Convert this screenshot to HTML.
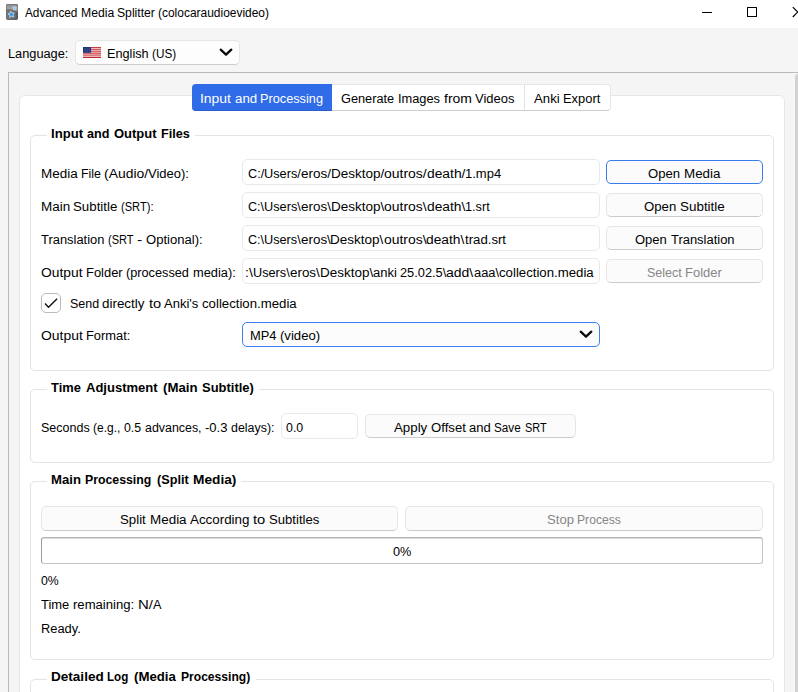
<!DOCTYPE html>
<html><head><meta charset="utf-8"><title>Advanced Media Splitter</title>
<style>
html,body{margin:0;padding:0;}
body{width:798px;height:692px;overflow:hidden;position:relative;background:#f5f5f5;font-family:"Liberation Sans",sans-serif;font-size:12.5px;color:#000;}
div,span,svg{position:absolute;box-sizing:border-box;}
.t{line-height:16px;white-space:nowrap;transform-origin:0 0;color:#000;}
#titlebar{left:0;top:0;width:798px;height:28px;background:#fff;}
.combo{background:#fdfdfd;border:1px solid #e6e6e6;border-bottom-color:#cdcdcd;border-radius:5px;}
.edit{background:#fff;border:1px solid #e9e9e9;border-radius:5px;}
.btn{background:#fbfbfb;border:1px solid #e6e6e6;border-bottom-color:#cbcbcb;border-radius:5px;}
.grp{border:1px solid #e4e4e4;border-radius:5px;}
.gt{background:#fff;height:14px;}

</style></head>
<body>
<div id="titlebar"></div>
<!-- app icon -->
<svg style="left:6px;top:4px" width="12" height="16" viewBox="0 0 12 16">
  <defs>
    <linearGradient id="ig" x1="0" y1="0" x2="1" y2="0"><stop offset="0" stop-color="#7a7a7a"/><stop offset="0.75" stop-color="#6a6a6a"/><stop offset="1" stop-color="#4e4e4e"/></linearGradient>
    <linearGradient id="ih" x1="0" y1="0" x2="0" y2="1"><stop offset="0" stop-color="#8a8a8a"/><stop offset="0.5" stop-color="#a4a4a4"/><stop offset="1" stop-color="#8c8c8c"/></linearGradient>
    <clipPath id="ic"><rect x="0" y="0" width="12" height="16" rx="2.2"/></clipPath>
  </defs>
  <g clip-path="url(#ic)">
    <rect width="12" height="16" fill="url(#ig)"/>
    <path d="M0 0 H12 V8.6 C9 6.2 4 4.6 0 5.2 Z" fill="url(#ih)"/>
    <rect x="0" y="0" width="12" height="16" rx="2.2" fill="none" stroke="#5a5a5a" stroke-width="0.8"/>
  </g>
  <polygon points="4.76,7.15 6.10,8.97 8.35,8.90 7.03,10.74 7.80,12.86 5.65,12.17 3.86,13.56 3.85,11.30 1.98,10.03 4.13,9.32" fill="#2b95ea" stroke="#dbeeff" stroke-width="0.7" stroke-linejoin="round"/>
  <polygon points="8.95,2.23 9.32,3.51 10.58,3.92 9.48,4.67 9.48,6.00 8.43,5.18 7.16,5.59 7.61,4.34 6.83,3.26 8.16,3.30" fill="#62b0f2" stroke="#eef7ff" stroke-width="0.6" stroke-linejoin="round"/>
</svg>
<!-- window controls -->
<div style="left:702px;top:12px;width:10px;height:1px;background:#000"></div>
<div style="left:747px;top:7px;width:10px;height:10px;border:1px solid #000;border-radius:0.5px"></div>
<svg style="left:792px;top:6px" width="6" height="12" viewBox="0 0 6 12"><path d="M0.8 1.2 L6 6.4 M0.8 11 L6 5.8" stroke="#000" stroke-width="1.15" fill="none"/></svg>

<!-- language combo -->
<div class="combo" style="left:75px;top:40px;width:165px;height:25px"></div>
<svg style="left:83px;top:47px" width="18" height="11" viewBox="0 0 18 11">
  <rect width="18" height="11" fill="#eec9c9"/>
  <g fill="#cf4a50"><rect y="0" width="18" height="1"/><rect y="1.9" width="18" height="1"/><rect y="3.8" width="18" height="1"/><rect y="5.7" width="18" height="1.1"/><rect y="7.6" width="18" height="1"/></g>
  <rect y="9.9" width="18" height="1.1" fill="#c4242a"/>
  <rect y="0" width="18" height="0.7" fill="#c8343a"/>
  <rect width="8" height="5.8" fill="#1f3579"/>
  <g fill="#3a4f90"><rect x="1.5" y="1.2" width="1.2" height="3.4"/><rect x="3.6" y="1.2" width="1.2" height="3.4"/><rect x="5.7" y="1.2" width="1.2" height="3.4"/></g>
</svg>
<svg style="left:219px;top:48px" width="14" height="9" viewBox="0 0 14 9"><path d="M1.7 1.7 L7 6.7 L12.3 1.7" stroke="#0c0c0c" stroke-width="2.3" fill="none" stroke-linecap="round" stroke-linejoin="round"/></svg>

<!-- outer scroll frame -->
<div style="left:8px;top:72px;width:800px;height:700px;border:1px solid #b9b9b9;border-bottom:none;background:#f5f5f5"></div>
<div style="left:795px;top:74px;width:3px;height:620px;background:#d2d2d2;border-radius:3px 0 0 0"></div>
<!-- tab pane -->
<div style="left:19px;top:95px;width:766px;height:700px;background:#fff;border:1px solid #e6e6e6;border-radius:6px"></div>
<!-- tabs -->
<div style="left:192px;top:84px;width:419px;height:27px;background:#fff;border:1px solid #e6e6e6;border-bottom-color:#cdcdcd;border-radius:4px"></div>
<div style="left:192px;top:84px;width:140px;height:27px;background:#306be8;border-bottom:1px solid #2a5ecf;border-radius:4px 0 0 4px"></div>
<div style="left:524px;top:85px;width:1px;height:25px;background:#e2e2e2"></div>

<!-- group 1 -->
<div class="grp" style="left:30px;top:135px;width:744px;height:236px"></div>
<div class="gt" style="left:47px;top:128px;width:148px"></div>
<div class="edit" style="left:242px;top:159px;width:358px;height:26px"></div>
<div class="edit" style="left:242px;top:192px;width:358px;height:26px"></div>
<div class="edit" style="left:242px;top:225px;width:358px;height:26px"></div>
<div class="edit" style="left:242px;top:258px;width:358px;height:26px"></div>
<div class="btn" style="left:606px;top:160px;width:157px;height:24px;border-color:#3a7cf0"></div>
<div class="btn" style="left:606px;top:193px;width:157px;height:24px"></div>
<div class="btn" style="left:606px;top:226px;width:157px;height:24px"></div>
<div class="btn" style="left:606px;top:259px;width:157px;height:24px"></div>
<!-- checkbox -->
<div style="left:41px;top:293px;width:20px;height:20px;background:#fff;border:1px solid #bcbcbc;border-radius:5px"></div>
<svg style="left:41px;top:293px" width="20" height="20" viewBox="0 0 20 20"><path d="M4.0 10.4 L7.5 14.2 L16.1 5.7" stroke="#141414" stroke-width="1.45" fill="none" stroke-linecap="butt" stroke-linejoin="miter"/></svg>
<!-- output format combo -->
<div class="combo" style="left:242px;top:322px;width:358px;height:25px;border-color:#3d80f2;background:#fcfcfc"></div>
<svg style="left:579px;top:330px" width="14" height="9" viewBox="0 0 14 9"><path d="M1.7 1.7 L7 6.7 L12.3 1.7" stroke="#0c0c0c" stroke-width="2.3" fill="none" stroke-linecap="round" stroke-linejoin="round"/></svg>

<!-- group 2 -->
<div class="grp" style="left:30px;top:389px;width:744px;height:74px"></div>
<div class="gt" style="left:47px;top:382px;width:212px"></div>
<div class="edit" style="left:281px;top:413px;width:77px;height:26px"></div>
<div class="btn" style="left:365px;top:414px;width:211px;height:24px"></div>

<!-- group 3 -->
<div class="grp" style="left:30px;top:481px;width:744px;height:179px"></div>
<div class="gt" style="left:47px;top:475px;width:194px"></div>
<div class="btn" style="left:41px;top:506px;width:357px;height:25px"></div>
<div class="btn" style="left:405px;top:506px;width:358px;height:25px"></div>
<div style="left:41px;top:537px;width:722px;height:27px;background:#fff;border:1px solid;border-color:#b2b3b6 #c4c4c4 #c4c4c4 #9c9ea3;border-radius:3px;box-shadow:inset 0 1px 0 #dcdcdc"></div>

<!-- group 4 -->
<div class="grp" style="left:30px;top:679px;width:744px;height:60px"></div>
<div class="gt" style="left:47px;top:672px;width:209px"></div>

<span class="t" style="left:24.80px;top:5px;transform:scaleX(0.9822);font-size:12px;">Advanced </span>
<span class="t" style="left:80.52px;top:5px;transform:scaleX(1.0155);font-size:12px;">Media </span>
<span class="t" style="left:117.00px;top:5px;transform:scaleX(1.0149);font-size:12px;">Splitter </span>
<span class="t" style="left:158.20px;top:5px;transform:scaleX(0.9963);font-size:12px;">(colocaraudioevideo)</span>
<span class="t" style="left:8.38px;top:46px;transform:scaleX(1.0217);">Language:</span>
<span class="t" style="left:106.59px;top:46px;transform:scaleX(1.0150);">English </span>
<span class="t" style="left:151.83px;top:46px;transform:scaleX(0.9414);">(US)</span>
<span class="t" style="left:199.92px;top:91px;transform:scaleX(1.1141);color:#fff;">Input </span>
<span class="t" style="left:234.54px;top:91px;transform:scaleX(1.0626);color:#fff;">and </span>
<span class="t" style="left:260.36px;top:91px;transform:scaleX(1.0182);color:#fff;">Processing</span>
<span class="t" style="left:341.39px;top:91px;transform:scaleX(1.0208);">Generate </span>
<span class="t" style="left:398.22px;top:91px;transform:scaleX(1.0250);">Images </span>
<span class="t" style="left:443.86px;top:91px;transform:scaleX(1.1172);">from </span>
<span class="t" style="left:475.42px;top:91px;transform:scaleX(1.0409);">Videos</span>
<span class="t" style="left:533.70px;top:91px;transform:scaleX(1.0570);">Anki </span>
<span class="t" style="left:563.01px;top:91px;transform:scaleX(1.0314);">Export</span>
<span class="t" style="left:50.76px;top:126px;transform:scaleX(1.0496);font-weight:bold;">Input </span>
<span class="t" style="left:87.35px;top:126px;transform:scaleX(1.0101);font-weight:bold;">and </span>
<span class="t" style="left:114.08px;top:126px;transform:scaleX(1.0386);font-weight:bold;">Output </span>
<span class="t" style="left:161.39px;top:126px;transform:scaleX(1.0153);font-weight:bold;">Files</span>
<span class="t" style="left:51.30px;top:380px;transform:scaleX(1.0300);font-weight:bold;">Time </span>
<span class="t" style="left:85.69px;top:380px;transform:scaleX(1.0419);font-weight:bold;">Adjustment </span>
<span class="t" style="left:163.17px;top:380px;transform:scaleX(1.0575);font-weight:bold;">(Main </span>
<span class="t" style="left:202.04px;top:380px;transform:scaleX(1.0381);font-weight:bold;">Subtitle)</span>
<span class="t" style="left:50.66px;top:472px;transform:scaleX(1.0506);font-weight:bold;">Main </span>
<span class="t" style="left:84.51px;top:472px;transform:scaleX(0.9840);font-weight:bold;">Processing </span>
<span class="t" style="left:156.99px;top:472px;transform:scaleX(1.0121);font-weight:bold;">(Split </span>
<span class="t" style="left:192.62px;top:472px;transform:scaleX(1.0950);font-weight:bold;">Media)</span>
<span class="t" style="left:50.63px;top:669px;transform:scaleX(1.0842);font-weight:bold;">Detailed </span>
<span class="t" style="left:107.06px;top:669px;transform:scaleX(0.9308);font-weight:bold;">Log </span>
<span class="t" style="left:133.57px;top:669px;transform:scaleX(1.0567);font-weight:bold;">(Media </span>
<span class="t" style="left:181.23px;top:669px;transform:scaleX(0.9667);font-weight:bold;">Processing)</span>
<span class="t" style="left:40.52px;top:166px;transform:scaleX(1.0773);">Media </span>
<span class="t" style="left:80.84px;top:166px;transform:scaleX(0.9867);">File </span>
<span class="t" style="left:104.35px;top:166px;transform:scaleX(1.1133);">(Audio/</span>
<span class="t" style="left:148.45px;top:166px;transform:scaleX(1.0391);">Video):</span>
<span class="t" style="left:40.53px;top:199px;transform:scaleX(1.0748);">Main </span>
<span class="t" style="left:73.25px;top:199px;transform:scaleX(1.0628);">Subtitle </span>
<span class="t" style="left:121.16px;top:199px;transform:scaleX(0.8896);">(SRT):</span>
<span class="t" style="left:41.34px;top:232px;transform:scaleX(1.0324);">Translation </span>
<span class="t" style="left:108.28px;top:232px;transform:scaleX(0.8821);">(SRT </span>
<span class="t" style="left:137.38px;top:232px;transform:scaleX(1.2540);">- </span>
<span class="t" style="left:146.18px;top:232px;transform:scaleX(1.0463);">Optional):</span>
<span class="t" style="left:40.99px;top:265px;transform:scaleX(1.1079);">Output </span>
<span class="t" style="left:86.18px;top:265px;transform:scaleX(1.0339);">Folder </span>
<span class="t" style="left:126.43px;top:265px;transform:scaleX(1.0177);">(processed </span>
<span class="t" style="left:192.97px;top:265px;transform:scaleX(1.0265);">media):</span>
<span class="t" style="left:69.75px;top:296px;transform:scaleX(0.9963);">Send </span>
<span class="t" style="left:102.44px;top:296px;transform:scaleX(1.0734);">directly </span>
<span class="t" style="left:148.55px;top:296px;transform:scaleX(1.1685);">to </span>
<span class="t" style="left:164.34px;top:296px;transform:scaleX(1.0407);">Anki's </span>
<span class="t" style="left:202.24px;top:296px;transform:scaleX(1.0566);">collection.media</span>
<span class="t" style="left:40.99px;top:328px;transform:scaleX(1.1128);">Output </span>
<span class="t" style="left:86.38px;top:328px;transform:scaleX(1.0306);">Format:</span>
<span class="t" style="left:247.89px;top:166px;transform:scaleX(1.0110);">C:/</span>
<span class="t" style="left:264.04px;top:166px;transform:scaleX(1.0201);">Users/</span>
<span class="t" style="left:300.88px;top:166px;transform:scaleX(1.0768);">eros/</span>
<span class="t" style="left:330.81px;top:166px;transform:scaleX(1.0811);">Desktop/</span>
<span class="t" style="left:384.14px;top:166px;transform:scaleX(1.1166);">outros/</span>
<span class="t" style="left:426.81px;top:166px;transform:scaleX(1.1049);">death/</span>
<span class="t" style="left:465.21px;top:166px;transform:scaleX(1.0408);">1.mp4</span>
<span class="t" style="left:247.90px;top:199px;transform:scaleX(1.0057);">C:\</span>
<span class="t" style="left:263.96px;top:199px;transform:scaleX(1.0188);">Users\</span>
<span class="t" style="left:300.75px;top:199px;transform:scaleX(1.0747);">eros\</span>
<span class="t" style="left:330.62px;top:199px;transform:scaleX(1.0808);">Desktop\</span>
<span class="t" style="left:383.94px;top:199px;transform:scaleX(1.1157);">outros\</span>
<span class="t" style="left:426.57px;top:199px;transform:scaleX(1.1036);">death\</span>
<span class="t" style="left:464.92px;top:199px;transform:scaleX(1.0140);">1.srt</span>
<span class="t" style="left:247.90px;top:232px;transform:scaleX(1.0040);">C:\</span>
<span class="t" style="left:263.93px;top:232px;transform:scaleX(1.0171);">Users\</span>
<span class="t" style="left:300.67px;top:232px;transform:scaleX(1.0729);">eros\</span>
<span class="t" style="left:330.48px;top:232px;transform:scaleX(1.0790);">Desktop\</span>
<span class="t" style="left:383.71px;top:232px;transform:scaleX(1.1138);">outros\</span>
<span class="t" style="left:426.27px;top:232px;transform:scaleX(1.1018);">death\</span>
<span class="t" style="left:464.56px;top:232px;transform:scaleX(1.0545);">trad.srt</span>
<span class="t" style="left:245.15px;top:265px;transform:scaleX(1.1332);">:\</span>
<span class="t" style="left:253.02px;top:265px;transform:scaleX(1.0164);">Users\</span>
<span class="t" style="left:289.73px;top:265px;transform:scaleX(1.0721);">eros\</span>
<span class="t" style="left:319.53px;top:265px;transform:scaleX(1.0783);">Desktop\</span>
<span class="t" style="left:372.71px;top:265px;transform:scaleX(1.0413);">anki </span>
<span class="t" style="left:400.20px;top:265px;transform:scaleX(1.0232);">25.02.5\</span>
<span class="t" style="left:446.42px;top:265px;transform:scaleX(1.1186);">add\</span>
<span class="t" style="left:473.64px;top:265px;transform:scaleX(1.0325);">aaa\</span>
<span class="t" style="left:498.76px;top:265px;transform:scaleX(1.0565);">collection.media</span>
<span class="t" style="left:250.07px;top:328px;transform:scaleX(1.0310);">MP4 </span>
<span class="t" style="left:280.20px;top:328px;transform:scaleX(1.0495);">(video)</span>
<span class="t" style="left:648.42px;top:166px;transform:scaleX(1.0475);">Open </span>
<span class="t" style="left:684.07px;top:166px;transform:scaleX(1.0686);">Media</span>
<span class="t" style="left:644.42px;top:199px;transform:scaleX(1.0556);">Open </span>
<span class="t" style="left:680.34px;top:199px;transform:scaleX(1.0735);">Subtitle</span>
<span class="t" style="left:635.43px;top:232px;transform:scaleX(1.0399);">Open </span>
<span class="t" style="left:670.81px;top:232px;transform:scaleX(1.0350);">Translation</span>
<span class="t" style="left:646.95px;top:265px;transform:scaleX(1.0005);color:#868686;">Select </span>
<span class="t" style="left:685.34px;top:265px;transform:scaleX(1.0394);color:#868686;">Folder</span>
<span class="t" style="left:41.05px;top:420px;transform:scaleX(1.0002);">Seconds </span>
<span class="t" style="left:93.33px;top:420px;transform:scaleX(0.9577);">(e.g., </span>
<span class="t" style="left:124.23px;top:420px;transform:scaleX(0.9852);">0.5 </span>
<span class="t" style="left:144.97px;top:420px;transform:scaleX(0.9922);">advances, </span>
<span class="t" style="left:205.13px;top:420px;transform:scaleX(1.0403);">-0.3 </span>
<span class="t" style="left:231.16px;top:420px;transform:scaleX(0.9929);">delays):</span>
<span class="t" style="left:286.25px;top:420px;transform:scaleX(0.9894);">0.0</span>
<span class="t" style="left:393.80px;top:420px;transform:scaleX(1.0637);">Apply </span>
<span class="t" style="left:430.64px;top:420px;transform:scaleX(1.0521);">Offset </span>
<span class="t" style="left:469.06px;top:420px;transform:scaleX(1.0418);">and </span>
<span class="t" style="left:494.37px;top:420px;transform:scaleX(0.9367);">Save </span>
<span class="t" style="left:524.64px;top:420px;transform:scaleX(0.8724);">SRT</span>
<span class="t" style="left:120.22px;top:512px;transform:scaleX(1.0586);">Split </span>
<span class="t" style="left:149.59px;top:512px;transform:scaleX(1.0745);">Media </span>
<span class="t" style="left:189.80px;top:512px;transform:scaleX(1.0699);">According </span>
<span class="t" style="left:252.90px;top:512px;transform:scaleX(1.1757);">to </span>
<span class="t" style="left:268.79px;top:512px;transform:scaleX(1.0488);">Subtitles</span>
<span class="t" style="left:546.52px;top:512px;transform:scaleX(1.0491);color:#868686;">Stop </span>
<span class="t" style="left:577.12px;top:512px;transform:scaleX(0.9727);color:#868686;">Process</span>
<span class="t" style="left:392.54px;top:544px;transform:scaleX(1.0173);">0%</span>
<span class="t" style="left:41.16px;top:573px;transform:scaleX(0.9824);">0%</span>
<span class="t" style="left:41.34px;top:597px;transform:scaleX(1.0338);">Time </span>
<span class="t" style="left:73.17px;top:597px;transform:scaleX(1.0488);">remaining: </span>
<span class="t" style="left:137.98px;top:597px;transform:scaleX(1.1951);">N/</span>
<span class="t" style="left:152.92px;top:597px;transform:scaleX(1.0158);">A</span>
<span class="t" style="left:40.57px;top:621px;transform:scaleX(1.0286);">Ready.</span>
</body></html>
